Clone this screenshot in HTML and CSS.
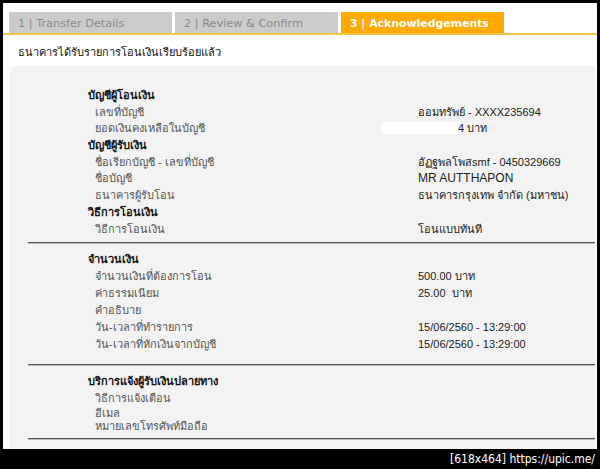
FILE: index.html
```html
<!DOCTYPE html>
<html>
<head>
<meta charset="utf-8">
<link rel="stylesheet" href="styles.css">
</head>
<body>
<div class="frame">
  <div class="tabs">
    <div class="tab">1 | Transfer Details</div>
    <div class="tab">2 | Review &amp; Confirm</div>
    <div class="tab active">3 | Acknowledgements</div>
  </div>
  <div class="notice">ธนาคารได้รับรายการโอนเงินเรียบร้อยแล้ว</div>
  <div class="panel">
    <div class="sec sec1">
      <div class="row head"><span class="lab">บัญชีผู้โอนเงิน</span></div>
      <div class="row"><span class="lab">เลขที่บัญชี</span><span class="val">ออมทรัพย์ - XXXX235694</span></div>
      <div class="row"><span class="lab">ยอดเงินคงเหลือในบัญชี</span><span class="val redact"><span class="mask"></span>4 บาท</span></div>
      <div class="row head"><span class="lab">บัญชีผู้รับเงิน</span></div>
      <div class="row"><span class="lab">ชื่อเรียกบัญชี - เลขที่บัญชี</span><span class="val">อัฏฐพลโพสsmf - 0450329669</span></div>
      <div class="row"><span class="lab">ชื่อบัญชี</span><span class="val latin">MR AUTTHAPON</span></div>
      <div class="row"><span class="lab">ธนาคารผู้รับโอน</span><span class="val">ธนาคารกรุงเทพ จำกัด (มหาชน)</span></div>
      <div class="row head"><span class="lab">วิธีการโอนเงิน</span></div>
      <div class="row"><span class="lab">วิธีการโอนเงิน</span><span class="val">โอนแบบทันที</span></div>
    </div>
    <div class="rule"></div>
    <div class="sec sec2">
      <div class="row head"><span class="lab">จำนวนเงิน</span></div>
      <div class="row"><span class="lab">จำนวนเงินที่ต้องการโอน</span><span class="val">500.00 บาท</span></div>
      <div class="row"><span class="lab">ค่าธรรมเนียม</span><span class="val">25.00 &nbsp;บาท</span></div>
      <div class="row"><span class="lab">คำอธิบาย</span><span class="val"></span></div>
      <div class="row"><span class="lab">วัน-เวลาที่ทำรายการ</span><span class="val">15/06/2560 - 13:29:00</span></div>
      <div class="row"><span class="lab">วัน-เวลาที่หักเงินจากบัญชี</span><span class="val">15/06/2560 - 13:29:00</span></div>
    </div>
    <div class="rule"></div>
    <div class="sec sec3">
      <div class="row head"><span class="lab">บริการแจ้งผู้รับเงินปลายทาง</span></div>
      <div class="row r16"><span class="lab">วิธีการแจ้งเตือน</span></div>
      <div class="row r14"><span class="lab">อีเมล</span></div>
      <div class="row r13"><span class="lab">หมายเลขโทรศัพท์มือถือ</span></div>
    </div>
    <div class="rule"></div>
  </div>
</div>
<div class="watermark">[618x464] https://upic.me/</div>
</body>
</html>
```

FILE: styles.css
```css
html, body {
  margin: 0;
  padding: 0;
  background: #000;
}
body {
  width: 600px;
  height: 469px;
  overflow: hidden;
  font-family: "Liberation Sans", "Noto Sans", sans-serif;
  font-size: 11px;
  color: #222;
}
.frame {
  margin: 3px 3px 0 3px;
  height: 446px;
  background: #fff;
  overflow: hidden;
}
.tabs {
  display: flex;
  gap: 3px;
  padding: 9px 0 0 6px;
  border-bottom: 2px solid #f3c64a;
}
.tab {
  width: 163px;
  height: 21px;
  box-sizing: border-box;
  padding: 1px 0 0 9px;
  line-height: 21px;
  background: #cbcbcb;
  color: #8a8a8a;
  font-family: "DejaVu Sans", sans-serif;
  font-size: 11.3px;
}
.tab.active {
  background: #ffaa00;
  color: #fff;
  font-weight: bold;
  font-size: 10.9px;
}
.notice {
  padding: 10px 0 0 15px;
  height: 21px;
  line-height: 14px;
  font-size: 11px;
  color: #111;
}
.panel {
  margin: 0 2px 0 7px;
  background: #f3f3f3;
  height: 383px;
  overflow: hidden;
}
.sec1 { padding-top: 21px; padding-bottom: 5px; }
.sec2 { padding-top: 7px; padding-bottom: 11px; }
.sec3 { padding-top: 7px; padding-bottom: 5px; }
.row {
  display: flex;
  height: 16.7px;
  line-height: 16.7px;
  color: #555;
}
.sec2 .row { height: 17px; line-height: 17px; }
.row.r16 { height: 16px; line-height: 16px; }
.row.r14 { height: 14px; line-height: 14px; }
.row.r13 { height: 13px; line-height: 13px; }
.lab {
  width: 323px;
  padding-left: 85px;
  flex: none;
}
.head .lab {
  padding-left: 78px;
  font-weight: bold;
  color: #111;
  width: 330px;
}
.val {
  color: #222;
}
.val.latin {
  font-size: 12px;
}
.redact {
  position: relative;
  padding-left: 40px;
}
.mask {
  position: absolute;
  left: -36px;
  top: 2px;
  width: 76px;
  height: 12px;
  background: #fff;
}
.rule {
  margin-left: 18px;
  height: 1px;
  background: #555;
  border-bottom: 1px solid #bbb;
}
.watermark {
  text-align: right;
  padding-right: 5px;
  height: 20px;
  line-height: 20px;
  color: #fff;
  font-family: "DejaVu Sans Condensed", "DejaVu Sans", sans-serif;
  font-size: 12px;
}
```
